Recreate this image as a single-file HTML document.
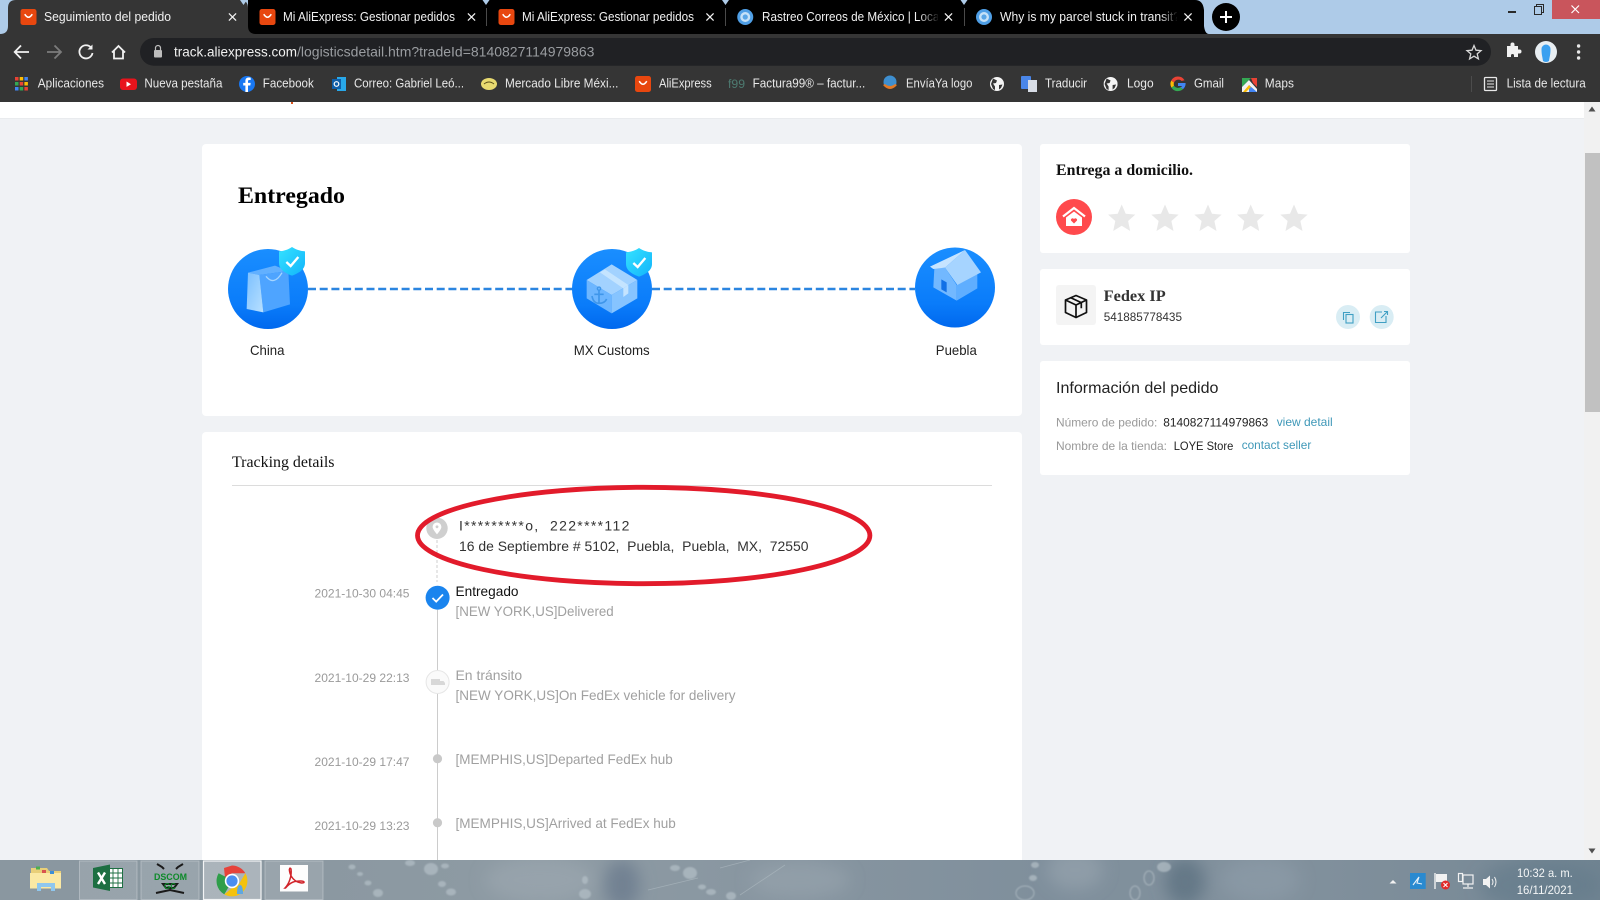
<!DOCTYPE html>
<html lang="es"><head><meta charset="utf-8"><title>Seguimiento del pedido</title>
<style>
html,body{margin:0;padding:0;background:#f0f2f5;overflow:hidden;width:1600px;height:900px}
svg{display:block;position:absolute;left:0;top:0}
text{font-family:"Liberation Sans",sans-serif;white-space:pre}
.s{font-family:"Liberation Serif",serif}
.tab{font-size:12.5px;fill:#f1f1f1}
.bm{font-size:12.5px;fill:#e8e8e8}
.g{font-size:12px;fill:#9a9a9a}
.t{font-size:14px}
</style></head><body>
<svg width="1600" height="900" viewBox="0 0 1600 900" xmlns="http://www.w3.org/2000/svg">
<defs>
<clipPath id="tb"><rect y="860" width="1600" height="40"/></clipPath>
<linearGradient id="blue" x1="0" y1="0" x2="0" y2="1"><stop offset="0" stop-color="#1a8eff"/><stop offset=".7" stop-color="#0a7cfa"/><stop offset="1" stop-color="#0068ee"/></linearGradient>
<linearGradient id="sh" x1="0" y1="0" x2="1" y2="1"><stop offset="0" stop-color="#35e2ff"/><stop offset="1" stop-color="#12b4fb"/></linearGradient>
<linearGradient id="bagl" x1="0" y1="0" x2="1" y2="1"><stop offset="0" stop-color="#7cc0ff"/><stop offset="1" stop-color="#b8e0ff"/></linearGradient>
<linearGradient id="fadeT" x1="0" y1="0" x2="1" y2="0"><stop offset="0" stop-color="#000" stop-opacity="0"/><stop offset="1" stop-color="#000"/></linearGradient>
<linearGradient id="task" x1="0" y1="0" x2="1" y2="0"><stop offset="0" stop-color="#8a97a0"/><stop offset=".2" stop-color="#8b98a1"/><stop offset=".35" stop-color="#8e9ba4"/><stop offset=".5" stop-color="#8795a0"/><stop offset=".65" stop-color="#7f8f9c"/><stop offset=".8" stop-color="#82919d"/><stop offset=".92" stop-color="#7a8b98"/><stop offset="1" stop-color="#6f8391"/></linearGradient>
<filter id="b1"><feGaussianBlur stdDeviation=".8"/></filter>
<filter id="b6" x="-50%" y="-100%" width="200%" height="300%"><feGaussianBlur stdDeviation="8"/></filter>
<symbol id="ae" viewBox="0 0 17 17"><rect width="17" height="17" rx="2.5" fill="#e8470f"/><path d="M4.5 5.5q4 6.5 8 0" fill="none" stroke="#fff" stroke-width="1.6"/></symbol>
<symbol id="x" viewBox="0 0 10 10"><path d="M1 1L9 9M9 1L1 9" stroke="#f2f2f2" stroke-width="1.4" fill="none"/></symbol>
<symbol id="gl" viewBox="0 0 16 16"><circle cx="8" cy="8" r="8" fill="#4f9fe6"/><circle cx="8" cy="8" r="5" fill="#c6e2f8"/><circle cx="8" cy="8" r="2.6" fill="#5aa6e6"/></symbol>
<symbol id="wg" viewBox="0 0 14 14"><circle cx="7" cy="7" r="7" fill="#f4f4f4"/><path d="M3 1.5L7 3.5 6 6 3 6.5 5 9.5 5 13 3 12 1 7ZM9 8l3.5-.5L11 11 9 12.5Z" fill="#353535"/></symbol>
<symbol id="gg" viewBox="0 0 16 16"><path d="M14.5 4.2A7.6 7.6 0 0 0 1.2 4.6L4 6.6A4.6 4.6 0 0 1 11.6 5Z" fill="#ea4335"/><path d="M1.2 4.6a7.6 7.6 0 0 0 .2 7L4 9.7a4.6 4.6 0 0 1 0-3.1Z" fill="#fbbc05"/><path d="M1.4 11.6a7.6 7.6 0 0 0 11.6 1.5l-2.6-2a4.6 4.6 0 0 1-6.4-1.4Z" fill="#34a853"/><path d="M15.6 7H8v3h4.3a3.6 3.6 0 0 1-1.9 1.1l2.6 2A7.6 7.6 0 0 0 15.6 7Z" fill="#4285f4"/></symbol>
<symbol id="sh1" viewBox="0 0 78 86" overflow="visible"><path d="M39 0C52 9 66 12 78 13V48C78 68 58 79 39 86 20 79 0 68 0 48V13C13 12 26 9 39 0Z" fill="url(#sh)"/><path d="M22 45L35 57 58 30" fill="none" stroke="#fff" stroke-width="7"/></symbol>
<symbol id="star" viewBox="-14 -14 28 28"><path d="M0-13.5L4-4.3 13.6-3.4 6.4 3 8.5 13 0 7.8-8.5 13-6.4 3-13.6-3.4-4-4.3Z" fill="#e8e8e8"/></symbol>
</defs>

<!-- page -->
<rect width="1600" height="900" fill="#f0f2f5"/>
<rect y="102" width="1584" height="16" fill="#fff"/>
<rect y="118" width="1584" height="1" fill="#e9ebee"/>
<rect x="291" y="102" width="2" height="2" fill="#d9541e"/>

<!-- main cards -->
<rect x="202" y="144" width="820" height="272" rx="4" fill="#fff"/>
<rect x="202" y="432" width="820" height="440" rx="4" fill="#fff"/>
<rect x="1040" y="144" width="370" height="109" rx="3" fill="#fff"/>
<rect x="1040" y="269" width="370" height="76" rx="3" fill="#fff"/>
<rect x="1040" y="361" width="370" height="114" rx="3" fill="#fff"/>

<text class="s" x="238" y="203" font-size="23.5" font-weight="700" fill="#000" textLength="107" lengthAdjust="spacingAndGlyphs">Entregado</text>

<!-- dashed -->
<path d="M308 289H573M652 289H915" stroke="#2b85e0" stroke-width="2.4" stroke-dasharray="8 3.7" fill="none"/>

<!-- China -->
<circle cx="268" cy="289" r="40" fill="url(#blue)"/>
<g transform="translate(220 235) scale(.3333)">
<polygon points="84,113 165,92 205,108 118,120" fill="#62b0ff"/>
<polygon points="118,120 205,108 210,208 130,232" fill="#4ea4ff"/>
<polygon points="84,113 118,120 130,232 80,222" fill="url(#bagl)"/>
<path d="M138 124Q162 154 186 113" fill="none" stroke="#a5d5ff" stroke-width="4"/>
</g>
<use href="#sh1" x="279" y="247" width="26" height="28.7"/>

<!-- MX -->
<circle cx="612" cy="289" r="40" fill="url(#blue)"/>
<g transform="translate(560 235) scale(.3333)">
<polygon points="155,88 232,135 155,180 80,135" fill="#a2d2ff"/>
<polygon points="80,135 155,180 155,235 80,190" fill="#6db6ff"/>
<polygon points="155,180 232,135 232,190 155,235" fill="#86c4ff"/>
<polygon points="120,112 135,103 205,150 190,160" fill="#c4e4ff"/>
<polygon points="190,160 205,150 205,175 190,186" fill="#c4e4ff"/>
<path d="M117 165V205M103 178H131M96 183Q100 205 117 205 134 205 140 192" fill="none" stroke="#3f96ea" stroke-width="5"/><circle cx="117" cy="161" r="5" fill="none" stroke="#3f96ea" stroke-width="4"/>
</g>
<use href="#sh1" x="626" y="248" width="26" height="28.7"/>

<!-- Puebla -->
<circle cx="955" cy="287.5" r="40" fill="url(#blue)"/>
<g transform="translate(900 235) scale(.3333)">
<polygon points="103,100 135,98 170,150 170,197 100,157" fill="#72b8ff"/>
<polygon points="170,150 232,115 232,160 170,197" fill="#5faeff"/>
<polygon points="135,98 195,45 243,112 172,150" fill="#a6d4ff"/>
<polygon points="90,95 195,45 135,98 100,102" fill="#c6e4ff"/>
<polygon points="124,133 140,142 140,172 124,163" fill="#1170e6"/>
</g>

<text class="t" x="250" y="355" fill="#222" textLength="34.5" lengthAdjust="spacingAndGlyphs">China</text>
<text class="t" x="573.7" y="355" fill="#222" textLength="76" lengthAdjust="spacingAndGlyphs">MX Customs</text>
<text class="t" x="935.8" y="355" fill="#222" textLength="41" lengthAdjust="spacingAndGlyphs">Puebla</text>

<!-- Tracking -->
<text class="s" x="232" y="467" font-size="15.5" fill="#111" textLength="102.5" lengthAdjust="spacingAndGlyphs">Tracking details</text>
<rect x="232" y="485" width="760" height="1" fill="#dcdcdc"/>

<path d="M437 540V582" stroke="#cfcfcf" stroke-dasharray="3 2" fill="none"/>
<path d="M437.5 610V872" stroke="#cccccc" fill="none"/>
<circle cx="437" cy="528.3" r="10.7" fill="#cfcfcf"/>
<path d="M437 522.5a4.4 4.4 0 0 1 4.4 4.4c0 2.6-4.4 7.4-4.4 7.4s-4.4-4.8-4.4-7.4a4.4 4.4 0 0 1 4.4-4.4Z" fill="#fff"/><circle cx="437" cy="526.8" r="1.4" fill="#cfcfcf"/>
<text class="t" x="459" y="530.7" fill="#333" textLength="170.4" lengthAdjust="spacing">I*********o,  222****112</text>
<text class="t" x="459" y="551" fill="#333" textLength="349.5" lengthAdjust="spacingAndGlyphs">16 de Septiembre # 5102,  Puebla,  Puebla,  MX,  72550</text>

<circle cx="437.6" cy="597.7" r="12" fill="#1a84ee"/>
<path d="M432.5 598L436.2 601.6 443 594.5" fill="none" stroke="#fff" stroke-width="1.8"/>
<circle cx="437.6" cy="682" r="11.5" fill="#fafafa" stroke="#e6e6e6" stroke-width="1"/>
<path d="M431 679h9v6h-9zM440 681h3.5l1.5 2v2h-5z" fill="#d8d8d8"/>
<circle cx="437.5" cy="758.7" r="4.6" fill="#c9c9c9"/>
<circle cx="437.5" cy="822.7" r="4.6" fill="#c9c9c9"/>

<text class="g" x="314.5" y="597.7" textLength="95" lengthAdjust="spacingAndGlyphs">2021-10-30 04:45</text>
<text class="g" x="314.5" y="682" textLength="95" lengthAdjust="spacingAndGlyphs">2021-10-29 22:13</text>
<text class="g" x="314.5" y="766" textLength="95" lengthAdjust="spacingAndGlyphs">2021-10-29 17:47</text>
<text class="g" x="314.5" y="830" textLength="95" lengthAdjust="spacingAndGlyphs">2021-10-29 13:23</text>

<text class="t" x="455.5" y="596" fill="#111" textLength="63" lengthAdjust="spacingAndGlyphs">Entregado</text>
<text class="t" x="455.5" y="616" fill="#a0a0a0" textLength="158.2" lengthAdjust="spacingAndGlyphs">[NEW YORK,US]Delivered</text>
<text class="t" x="455.5" y="680" fill="#a0a0a0" textLength="66.7" lengthAdjust="spacingAndGlyphs">En tránsito</text>
<text class="t" x="455.5" y="700" fill="#a0a0a0" textLength="280" lengthAdjust="spacingAndGlyphs">[NEW YORK,US]On FedEx vehicle for delivery</text>
<text class="t" x="455.5" y="764" fill="#a0a0a0" textLength="217.2" lengthAdjust="spacingAndGlyphs">[MEMPHIS,US]Departed FedEx hub</text>
<text class="t" x="455.5" y="828" fill="#a0a0a0" textLength="220.3" lengthAdjust="spacingAndGlyphs">[MEMPHIS,US]Arrived at FedEx hub</text>

<ellipse cx="643.7" cy="535.5" rx="226.2" ry="48.2" fill="none" stroke="#e21b2b" stroke-width="4.8"/>

<!-- Right col -->
<text class="s" x="1056" y="175" font-size="16" font-weight="700" fill="#111" textLength="137" lengthAdjust="spacingAndGlyphs">Entrega a domicilio.</text>
<circle cx="1074" cy="217" r="18" fill="#ff4a4d"/>
<path d="M1063 216.5L1074 208 1085 216.5" fill="none" stroke="#fff" stroke-width="2.2"/>
<path d="M1066 217.5L1074 211.5 1082 217.5V226H1066Z" fill="#fff"/>
<path d="M1074 223.5l-3-3a1.7 1.7 0 0 1 3-1.5 1.7 1.7 0 0 1 3 1.5Z" fill="#ff4a4d"/>
<use href="#star" x="1107.7" y="204" width="28" height="28"/>
<use href="#star" x="1151" y="204" width="28" height="28"/>
<use href="#star" x="1194" y="204" width="28" height="28"/>
<use href="#star" x="1236.7" y="204" width="28" height="28"/>
<use href="#star" x="1280" y="204" width="28" height="28"/>

<rect x="1056" y="285" width="40" height="40" rx="3" fill="#f4f4f4"/>
<g fill="none" stroke="#111" stroke-width="1.7" stroke-linejoin="round">
<path d="M1076 295.5l-10.5 4.5v12.5l10.5 5 10.5-5V300ZM1065.5 300l10.5 5 10.5-5M1076 305v12.5"/>
<path d="M1070.5 297.6l10.8 5v5.6"/>
</g>
<text class="s" x="1103.7" y="301" font-size="15.5" font-weight="700" fill="#333" textLength="62" lengthAdjust="spacingAndGlyphs">Fedex IP</text>
<text x="1103.7" y="321" font-size="12" fill="#333" textLength="78.3" lengthAdjust="spacingAndGlyphs">541885778435</text>
<circle cx="1348" cy="317" r="12" fill="#d9edf4"/>
<circle cx="1381.7" cy="317" r="12" fill="#d9edf4"/>
<g fill="none" stroke="#3f9fc3" stroke-width="1.1">
<path d="M1343.5 320V312.5H1350"/><rect x="1346" y="314.5" width="7" height="8.5"/>
<path d="M1382 312h-6.5v10.5h10.5V316M1381 318l6.5-6.5M1384 311.5h3.5v3.5"/>
</g>

<text x="1056" y="393" font-size="16" fill="#222" textLength="162.5" lengthAdjust="spacingAndGlyphs">Información del pedido</text>
<text x="1056" y="426.7" font-size="12" fill="#999" textLength="101.3" lengthAdjust="spacingAndGlyphs">Número de pedido:</text>
<text x="1163.3" y="426.7" font-size="12" fill="#222" textLength="105" lengthAdjust="spacingAndGlyphs">8140827114979863</text>
<text x="1276.7" y="426" font-size="12" fill="#3f98b8" textLength="56" lengthAdjust="spacingAndGlyphs">view detail</text>
<text x="1056" y="450" font-size="12" fill="#999" textLength="111" lengthAdjust="spacingAndGlyphs">Nombre de la tienda:</text>
<text x="1173.7" y="450" font-size="12" fill="#222" textLength="59.6" lengthAdjust="spacingAndGlyphs">LOYE Store</text>
<text x="1241.7" y="449" font-size="12" fill="#3f98b8" textLength="69.6" lengthAdjust="spacingAndGlyphs">contact seller</text>

<!-- scrollbar -->
<rect x="1584" y="102" width="16" height="758" fill="#f1f1f1"/>
<rect x="1585" y="153" width="15" height="259" fill="#c1c1c1"/>
<path d="M1592 106.5l3.5 5h-7ZM1592 853.5l3.5-5h-7Z" fill="#505050"/>

<!-- chrome frame -->
<rect width="1600" height="34" fill="#aecbe8"/>
<path d="M248 34V0H1195q8 0 9 10v16q1 8 5 8Z" fill="#000"/>
<path d="M0 34q8 0 8-8V8q0-8 8-8H240q8 0 8 8V26q0 8 8 8Z" fill="#353535"/>
<path d="M240 0l3.5 5 3.5-5ZM482.5 0l3.5 5 3.5-5ZM722 0l3.5 5 3.5-5ZM960.5 0l3.5 5 3.5-5Z" fill="#aecbe8"/>
<path d="M486.5 8V26M725.5 8V26M964.5 8V26" stroke="#4a4a4a"/>

<use href="#ae" x="20" y="9" width="17" height="16"/>
<use href="#ae" x="259" y="9" width="17" height="16"/>
<use href="#ae" x="498" y="9" width="17" height="16"/>
<use href="#gl" x="737" y="9" width="16.5" height="16"/>
<use href="#gl" x="976" y="9" width="16" height="16"/>

<text class="tab" x="44" y="21" textLength="127" lengthAdjust="spacingAndGlyphs">Seguimiento del pedido</text>
<text class="tab" x="283" y="21" textLength="172" lengthAdjust="spacingAndGlyphs">Mi AliExpress: Gestionar pedidos</text>
<text class="tab" x="522" y="21" textLength="172" lengthAdjust="spacingAndGlyphs">Mi AliExpress: Gestionar pedidos</text>
<text class="tab" x="762" y="21" textLength="180" lengthAdjust="spacingAndGlyphs">Rastreo Correos de México | Local</text>
<rect x="918" y="8" width="22" height="18" fill="url(#fadeT)"/><rect x="938" y="8" width="5" height="18" fill="#000"/>
<text class="tab" x="1000" y="21" textLength="180" lengthAdjust="spacingAndGlyphs">Why is my parcel stuck in transit?</text>
<rect x="1160" y="8" width="18" height="18" fill="url(#fadeT)"/><rect x="1177" y="8" width="5" height="18" fill="#000"/>

<use href="#x" x="228" y="12.5" width="9" height="9"/>
<use href="#x" x="467" y="12.5" width="9" height="9"/>
<use href="#x" x="705.5" y="12.5" width="9" height="9"/>
<use href="#x" x="944" y="12.5" width="9" height="9"/>
<use href="#x" x="1183.5" y="12.5" width="9" height="9"/>

<circle cx="1226" cy="17" r="14" fill="#000"/>
<path d="M1226 11V23M1220 17H1232" stroke="#fff" stroke-width="2"/>

<rect x="1552" width="48" height="19" fill="#c9555c"/>
<path d="M1571.5 5.5L1579 13M1579 5.5L1571.5 13" stroke="#fff" stroke-width="1.2" fill="none"/>
<rect x="1508" y="11" width="8" height="2" fill="#2a2a2a"/>
<path d="M1534.5 6.5h7v8h-7ZM1536.5 6.5V4.5h7v8h-2" fill="none" stroke="#2a2a2a" stroke-width="1"/>

<!-- toolbar -->
<rect y="34" width="1600" height="68" fill="#353535"/>
<rect x="140" y="38" width="1351" height="27.7" rx="13.8" fill="#202124"/>
<g fill="none" stroke="#f1f1f1" stroke-width="1.8">
<path d="M15 52H29M21 45.5L14.7 52 21 58.5"/>
<path d="M47 52H61M54.5 45.5L61 52 54.5 58.5" stroke="#7c7c7c"/>
<path d="M91 47.5A6.6 6.6 0 1 0 92.5 53"/>
<path d="M112 52.5L118.5 46 125 52.5M114 51V58.5H123V51"/>
</g>
<path d="M92.5 44.5V49.5H87.5Z" fill="#f1f1f1"/>
<rect x="154" y="50" width="8" height="7.5" rx="1" fill="#bdbdbd"/><path d="M155.5 50v-2a2.5 2.5 0 0 1 5 0v2" fill="none" stroke="#bdbdbd" stroke-width="1.2"/>
<text x="174" y="56.7" font-size="14" fill="#f1f1f1" textLength="123" lengthAdjust="spacingAndGlyphs">track.aliexpress.com</text>
<text x="297" y="56.7" font-size="14" fill="#9a9da1" textLength="297.4" lengthAdjust="spacingAndGlyphs">/logisticsdetail.htm?tradeId=8140827114979863</text>
<path d="M1474 45.5l2 4.7 5 .4-3.8 3.3 1.2 5-4.4-2.7-4.4 2.7 1.2-5-3.8-3.3 5-.4Z" fill="none" stroke="#d8d8d8" stroke-width="1.3"/>
<path d="M1507 49h3.5v-1.5a2 2 0 0 1 4 0V49h3.5v3.5h1.5a2 2 0 0 1 0 4H1518V60h-4v-1.5a1.5 1.5 0 0 0-3 0V60h-4Z" transform="translate(0 -3)" fill="#f1f1f1"/>
<ellipse cx="1546" cy="52" rx="11" ry="11" fill="#e8eef2"/>
<path d="M1541.5 49a4.5 4.5 0 0 1 9 0c0 6-1 8-1.5 12q-3 2-6 0c-.5-4-1.5-6-1.5-12Z" fill="#3aa0f0"/>
<circle cx="1578.6" cy="46" r="1.7" fill="#e8e8e8"/><circle cx="1578.6" cy="52" r="1.7" fill="#e8e8e8"/><circle cx="1578.6" cy="58" r="1.7" fill="#e8e8e8"/>

<!-- bookmarks -->
<g>
<rect x="15" y="77" width="3.5" height="3.5" fill="#e94235"/><rect x="19.7" y="77" width="3.5" height="3.5" fill="#fbbc05"/><rect x="24.4" y="77" width="3.5" height="3.5" fill="#4285f4"/>
<rect x="15" y="82" width="3.5" height="3.5" fill="#34a853"/><rect x="19.7" y="82" width="3.5" height="3.5" fill="#ea4335"/><rect x="24.4" y="82" width="3.5" height="3.5" fill="#fbbc05"/>
<rect x="15" y="87" width="3.5" height="3.5" fill="#4285f4"/><rect x="19.7" y="87" width="3.5" height="3.5" fill="#34a853"/><rect x="24.4" y="87" width="3.5" height="3.5" fill="#e94235"/>
<text class="bm" x="37.8" y="87.7" textLength="66.2" lengthAdjust="spacingAndGlyphs">Aplicaciones</text>
<rect x="120" y="78.5" width="17" height="11.5" rx="3" fill="#e8141c"/><path d="M126.5 81.5l4.5 2.7-4.5 2.7Z" fill="#fff"/>
<text class="bm" x="144.4" y="87.7" textLength="78" lengthAdjust="spacingAndGlyphs">Nueva pestaña</text>
<circle cx="247" cy="84" r="8" fill="#1877f2"/><path d="M248 92V85.5h2.3l.4-2.6H248v-1.6c0-.9.4-1.3 1.3-1.3h1.4v-2.3c-2.9-.5-5.3 0-5.3 3.3v1.9h-2.2v2.6h2.2V92Z" fill="#fff"/>
<text class="bm" x="262.8" y="87.7" textLength="51" lengthAdjust="spacingAndGlyphs">Facebook</text>
<rect x="337" y="77" width="9" height="14" fill="#28a8ea"/><rect x="332" y="79" width="9" height="10" fill="#0f5ea8"/><circle cx="336.5" cy="84" r="2.3" fill="none" stroke="#fff" stroke-width="1.2"/>
<text class="bm" x="354" y="87.7" textLength="110" lengthAdjust="spacingAndGlyphs">Correo: Gabriel Leó...</text>
<ellipse cx="489" cy="84" rx="8" ry="6" fill="#e8da70"/><path d="M484 84q5-4 10 0" stroke="#5a4f1a" fill="none"/>
<text class="bm" x="505" y="87.7" textLength="113.4" lengthAdjust="spacingAndGlyphs">Mercado Libre Méxi...</text>
<use href="#ae" x="635" y="76" width="16" height="16"/>
<text class="bm" x="659" y="87.7" textLength="52.7" lengthAdjust="spacingAndGlyphs">AliExpress</text>
<text x="728" y="88" font-size="11.5" fill="#4d7a70" textLength="17" lengthAdjust="spacingAndGlyphs">f99</text>
<text class="bm" x="752.6" y="87.7" textLength="112.7" lengthAdjust="spacingAndGlyphs">Factura99® – factur...</text>
<circle cx="890" cy="82" r="6.5" fill="#3e8fd0"/><path d="M883 85q7 8 14 0l-2-1q-5 4-10 0Z" fill="#e07a28"/>
<text class="bm" x="906" y="87.7" textLength="66.4" lengthAdjust="spacingAndGlyphs">EnvíaYa logo</text>
<use href="#wg" x="990" y="77" width="14" height="14"/>
<rect x="1021" y="76" width="10" height="13" rx="1" fill="#4a86e8"/><rect x="1028" y="80" width="9" height="12" fill="#d8dde6"/>
<text class="bm" x="1045" y="87.7" textLength="42" lengthAdjust="spacingAndGlyphs">Traducir</text>
<use href="#wg" x="1103.6" y="77" width="14" height="14"/>
<text class="bm" x="1127" y="87.7" textLength="26.6" lengthAdjust="spacingAndGlyphs">Logo</text>
<use href="#gg" x="1170" y="76" width="16" height="16"/>
<text class="bm" x="1194" y="87.7" textLength="30" lengthAdjust="spacingAndGlyphs">Gmail</text>
<path d="M1242 78h9l-9 9Z" fill="#34a853"/><path d="M1242 87l7-7 8 9v3h-15Z" fill="#f2f2f2"/><path d="M1251 78h6v9l-4-4Z" fill="#ea4335"/><path d="M1249 85l8 7h-8Z" fill="#4285f4"/><path d="M1243 92l6-7 2 2-5 5Z" fill="#fbbc05"/>
<text class="bm" x="1264.8" y="87.7" textLength="29.1" lengthAdjust="spacingAndGlyphs">Maps</text>
<path d="M1471.5 76V92" stroke="#4c4c4c"/>
<rect x="1484.5" y="77.5" width="12" height="13" rx="1" fill="none" stroke="#e8e8e8" stroke-width="1.3"/><path d="M1487 81h7M1487 84h7M1487 87h7" stroke="#e8e8e8"/>
<text class="bm" x="1506.6" y="87.7" textLength="79.1" lengthAdjust="spacingAndGlyphs">Lista de lectura</text>
</g>

<!-- taskbar -->
<rect y="860" width="1600" height="40" fill="url(#task)"/>
<g clip-path="url(#tb)">
<g filter="url(#b6)">
<ellipse cx="540" cy="880" rx="55" ry="22" fill="#a0acb4" opacity=".5"/>
<ellipse cx="622" cy="885" rx="18" ry="25" fill="#66788a" opacity=".7"/>
<ellipse cx="800" cy="880" rx="50" ry="18" fill="#a0adb5" opacity=".4"/>
<ellipse cx="1075" cy="870" rx="28" ry="20" fill="#a2adb5" opacity=".45"/>
<ellipse cx="1185" cy="882" rx="20" ry="24" fill="#5c7080" opacity=".75"/>
<ellipse cx="1260" cy="880" rx="40" ry="22" fill="#94a3ae" opacity=".4"/>
<ellipse cx="1540" cy="885" rx="60" ry="25" fill="#64798a" opacity=".6"/>
</g>
<g filter="url(#b1)" fill="#b4c0c7" opacity=".7">
<ellipse cx="352" cy="867" rx="3.5" ry="2.5"/><ellipse cx="360" cy="874" rx="3" ry="2"/><ellipse cx="368" cy="883" rx="3.5" ry="2.5"/><ellipse cx="378" cy="893" rx="5" ry="4"/>
<ellipse cx="410" cy="863" rx="5" ry="3"/><ellipse cx="431" cy="869" rx="7" ry="6"/><ellipse cx="445" cy="866" rx="4" ry="2.5"/><ellipse cx="442" cy="884" rx="4" ry="3"/><ellipse cx="451" cy="892" rx="5" ry="3.5"/>
<ellipse cx="585" cy="880" rx="3" ry="4"/><ellipse cx="585" cy="894" rx="6" ry="5"/>
<ellipse cx="675" cy="868" rx="5" ry="3"/><ellipse cx="690" cy="873" rx="7" ry="6"/><ellipse cx="702" cy="887" rx="4" ry="2.5"/><ellipse cx="711" cy="892" rx="5" ry="3"/><ellipse cx="731" cy="896" rx="5" ry="4"/>
<ellipse cx="1035" cy="865" rx="4" ry="3"/><ellipse cx="1033" cy="878" rx="4" ry="3"/><ellipse cx="1025" cy="893" rx="9" ry="7" fill="none" stroke="#bac5cb"/>
<ellipse cx="1164" cy="867" rx="7" ry="5"/><ellipse cx="1149" cy="878" rx="5" ry="7" fill="none" stroke="#bac5cb"/><ellipse cx="1135" cy="893" rx="5" ry="7" fill="none" stroke="#bac5cb"/>
</g>
<path d="M648 890l50-12M720 868l30-8M740 895l45-30" stroke="#b0bcc3" stroke-width=".8" fill="none" opacity=".6"/>
</g>
<!-- task buttons -->
<g fill="#fff" fill-opacity=".12" stroke="#d3dade" stroke-opacity=".45">
<rect x="79.5" y="861" width="57.5" height="38.5"/><rect x="141" y="861" width="58" height="38.5"/><rect x="265" y="861" width="58" height="38.5"/>
</g>
<rect x="203.5" y="861" width="57.5" height="38.5" fill="#fff" fill-opacity=".28" stroke="#f2f4f5" stroke-width="1.2"/>
<!-- folder -->
<path d="M31 868h16l2 3h12v17H31Z" fill="#e9cf78"/><path d="M30 873h31v15.5H30Z" fill="#fbe9a4"/>
<rect x="36" y="866.5" width="4" height="3" fill="#4caf50"/><rect x="42" y="870" width="4" height="3" fill="#d9534f"/><rect x="50" y="871" width="4" height="3" fill="#3d8fd6"/>
<path d="M37 891v-8h18v8h-4v-4H41v4Z" fill="#8fc7ee"/>
<!-- excel -->
<rect x="103" y="868.5" width="19.5" height="19" fill="#fff" stroke="#1d6f42"/><path d="M108 868.5v19M113 868.5v19M118 868.5v19M103 873h19M103 878h19M103 883h19" stroke="#1d6f42" stroke-width=".9"/>
<path d="M93 868l17-3.5v26.5l-17-3.5Z" fill="#1d6f42"/>
<path d="M98 872.5l7 11.5M105 872.5l-7 11.5" stroke="#fff" stroke-width="2.4"/>
<!-- dscom -->
<path d="M157 864l5 3 2 2M183 864l-5 3-2 2M163 884h14l-3 4h-8ZM156 893l14-3 14 3" stroke="#1a1a1a" stroke-width="2" fill="none"/>
<text x="154" y="880" font-size="9.5" font-weight="700" fill="#0d8a2a" textLength="33" lengthAdjust="spacingAndGlyphs">DSCOM</text>
<text x="164" y="889" font-size="8" font-weight="700" fill="#0d8a2a" textLength="12" lengthAdjust="spacingAndGlyphs">GC</text>
<!-- chrome -->
<g transform="translate(232 881)">
<path d="M0-15.5A15.5 15.5 0 0 1 13.4-7.7L0-7.7-7 -3-8-13Z" fill="#e6423a"/>
<path d="M-13.4-7.8A15.5 15.5 0 0 0-7.7 13.4L0 0 -6-4Z" fill="#2f9e4a"/>
<path d="M13.4-7.7A15.5 15.5 0 0 1-7.7 13.4L0 7 7 3Z" fill="#f4c20d"/>
<circle r="7.2" fill="#fff"/><circle r="5.6" fill="#4a8ef0"/>
<path d="M5 13c0-6 1-9 3-9s3 3 3 9Z" fill="#5fa8e0"/>
</g>
<!-- pdf -->
<rect x="280" y="865" width="28" height="26.5" fill="#fdfdfd"/>
<path d="M285 888c4-4 7-12 6-19-1-2-2 0-1.5 2 1 6 5 11 12 12 4 0 3-2-1-2-6 0-10 1-15 7Z" fill="none" stroke="#d1232a" stroke-width="1.5"/>
<!-- tray -->
<path d="M1393 880l3.5 3.5h-7Z" fill="#f2f2f2"/>
<rect x="1410" y="873" width="15.7" height="16" fill="#2a8ad0"/><path d="M1413 885l6-8-2 6 5 1" fill="none" stroke="#e8f2fa" stroke-width="1.1"/>
<path d="M1435 873v16" stroke="#f2f2f2" stroke-width="1.4"/><path d="M1436 874h11v8h-11Z" fill="#f2f2f2"/><circle cx="1445.5" cy="885" r="4.5" fill="#e22b2b"/><path d="M1443.5 883l4 4M1447.5 883l-4 4" stroke="#fff"/>
<g fill="none" stroke="#f2f2f2" stroke-width="1.2"><rect x="1463" y="875" width="10" height="9"/><rect x="1458.5" y="873.5" width="4" height="8"/><path d="M1468 884v3M1463 888h10"/></g>
<path d="M1483 879h3l4-3.5v13l-4-3.5h-3Z" fill="#f2f2f2"/><path d="M1492 879q2 3 0 6M1494.5 877q3 5 0 10" fill="none" stroke="#f2f2f2"/>
<text x="1517" y="877" font-size="12" fill="#f4f6f7" textLength="55.7" lengthAdjust="spacingAndGlyphs">10:32 a. m.</text>
<text x="1516.7" y="894" font-size="12" fill="#f4f6f7" textLength="56.3" lengthAdjust="spacingAndGlyphs">16/11/2021</text>
</svg>
</body></html>
